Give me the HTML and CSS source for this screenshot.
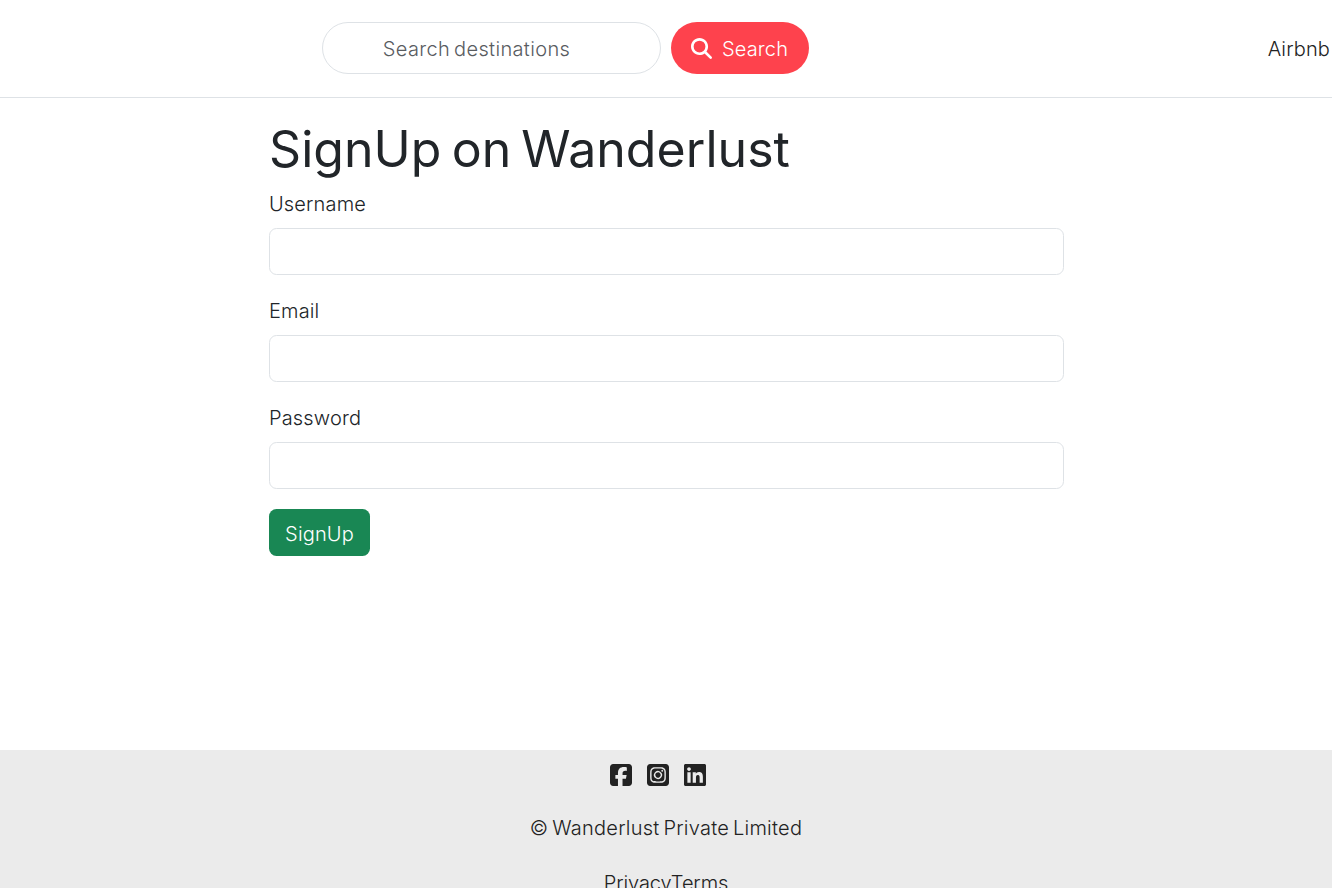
FILE: index.html
```
<!DOCTYPE html>
<html lang="en">
<head>
    <meta charset="UTF-8">
    <meta name="viewport" content="width=device-width, initial-scale=1.0">
    <title>Wanderlust</title>
    <link rel="stylesheet" href="styles.css">
</head>
<body>
    <nav class="navbar">
        <form class="search-form" role="search">
            <input class="search-inp" type="search" placeholder="Search destinations">
            <button class="search-btn" type="button">
                <svg class="icon" viewBox="0 0 512 512"><path d="M416 208c0 45.9-14.9 88.3-40 122.7L502.6 457.4c12.5 12.5 12.5 32.8 0 45.3s-32.8 12.5-45.3 0L330.7 376c-34.4 25.2-76.8 40-122.7 40C93.1 416 0 322.9 0 208S93.1 0 208 0S416 93.1 416 208zM208 352a144 144 0 1 0 0-288 144 144 0 1 0 0 288z"/></svg>
                <span>Search</span>
            </button>
        </form>
        <a class="nav-link" href="#">Airbnb</a>
    </nav>

    <main class="container">
        <h1>SignUp on Wanderlust</h1>
        <form>
            <div class="field">
                <label for="username">Username</label>
                <input type="text" id="username" name="username" required>
            </div>
            <div class="field">
                <label for="email">Email</label>
                <input type="email" id="email" name="email" required>
            </div>
            <div class="field">
                <label for="password">Password</label>
                <input type="password" id="password" name="password" required>
            </div>
            <button class="btn-success">SignUp</button>
        </form>
    </main>

    <footer>
        <div class="socials">
            <svg viewBox="0 0 448 512"><path d="M64 32C28.7 32 0 60.7 0 96V416c0 35.3 28.7 64 64 64h98.200V334.200H109.400V256h52.800V222.300c0-87.100 39.400-127.500 125-127.500c16.200 0 44.200 3.200 55.700 6.400V172c-6-.6-16.500-1-29.600-1c-42 0-58.200 15.900-58.200 57.200V256h83.600l-14.400 78.200H255V480H384c35.300 0 64-28.700 64-64V96c0-35.300-28.700-64-64-64H64z"/></svg>
            <svg viewBox="0 0 448 512"><path d="M194.400 211.700a53.300 53.300 0 1 0 59.300 88.700 53.300 53.300 0 1 0-59.300-88.700zm142.300-68.400c-5.200-5.200-11.500-9.300-18.400-12c-18.100-7.100-57.600-6.800-83.100-6.500c-4.100 0-7.900 .1-11.200 .1s-7.200 0-11.400-.1c-25.500-.3-64.800-.7-82.900 6.500c-6.900 2.700-13.100 6.800-18.400 12s-9.300 11.500-12 18.400c-7.100 18.100-6.700 57.700-6.500 83.200c0 4.100 .1 7.900 .1 11.100s0 7-.1 11.100c-.2 25.500-.6 65.100 6.500 83.200c2.700 6.900 6.800 13.100 12 18.400s11.500 9.300 18.400 12c18.100 7.100 57.600 6.800 83.100 6.500c4.100 0 7.900-.1 11.200-.1s7.200 0 11.400 .1c25.500 .3 64.800 .7 82.900-6.500c6.900-2.700 13.100-6.800 18.400-12s9.300-11.500 12-18.400c7.200-18 6.800-57.400 6.500-83c0-4.200-.1-8.100-.1-11.400s0-7.100 .1-11.400c.3-25.500 .7-64.900-6.500-83c-2.700-6.900-6.800-13.100-12-18.400zm-67.100 44.500A82 82 0 1 1 178.400 324.200a82 82 0 1 1 91.100-136.400zm29.200-1.300c-3.100-2.100-5.600-5.100-7.100-8.600s-1.800-7.300-1.100-11.100s2.600-7.100 5.200-9.800s6.100-4.500 9.800-5.200s7.600-.4 11.100 1.100s6.500 3.900 8.600 7s3.200 6.800 3.200 10.600c0 2.500-.5 5-1.400 7.300s-2.400 4.400-4.100 6.200s-3.900 3.200-6.200 4.200s-4.800 1.500-7.300 1.500c-3.800 0-7.500-1.100-10.600-3.200zM448 96c0-35.300-28.700-64-64-64H64C28.700 32 0 60.700 0 96V416c0 35.300 28.700 64 64 64H384c35.300 0 64-28.700 64-64V96zM357 389c-18.700 18.700-41.400 24.600-67 25.900c-26.400 1.500-105.600 1.500-132 0c-25.600-1.300-48.300-7.200-67-25.900s-24.600-41.400-25.800-67c-1.500-26.400-1.500-105.600 0-132c1.300-25.600 7.100-48.300 25.800-67s41.500-24.600 67-25.800c26.400-1.500 105.600-1.500 132 0c25.600 1.300 48.300 7.100 67 25.800s24.600 41.400 25.800 67c1.500 26.300 1.500 105.400 0 131.900c-1.300 25.600-7.100 48.300-25.800 67z"/></svg>
            <svg viewBox="0 0 448 512"><path d="M416 32H31.900C14.300 32 0 46.500 0 64.300v383.400C0 465.500 14.300 480 31.900 480H416c17.600 0 32-14.500 32-32.300V64.300c0-17.800-14.400-32.300-32-32.300zM135.400 416H69V202.200h66.500V416zm-33.200-243c-21.300 0-38.500-17.300-38.500-38.500S80.900 96 102.200 96c21.200 0 38.500 17.300 38.500 38.500 0 21.300-17.200 38.500-38.500 38.500zm282.100 243h-66.400V312c0-24.800-.5-56.700-34.500-56.700-34.600 0-39.900 27-39.900 54.900V416h-66.400V202.200h63.700v29.200h.9c8.900-16.800 30.600-34.500 62.900-34.500 67.200 0 79.700 44.300 79.700 101.900V416z"/></svg>
        </div>
        <div class="copyright">&copy; Wanderlust Private Limited</div>
        <div class="links">
            <a href="#">Privacy</a><a href="#">Terms</a>
        </div>
    </footer>
</body>
</html>
```
FILE: styles.css
```
* {
    box-sizing: border-box;
}

body {
    margin: 0;
    height: 100vh;
    display: flex;
    flex-direction: column;
    overflow: hidden;
    font-family: Inter, "Open Sans", sans-serif;
    font-size: 20px;
    font-weight: 300;
    line-height: 30px;
    letter-spacing: 0.15px;
    color: #212529;
    background-color: #fff;
}

input, button {
    font: inherit;
    letter-spacing: inherit;
}

a {
    color: #222;
    text-decoration: none;
}

/* Navbar */
.navbar {
    flex: none;
    height: 98px;
    padding: 22px 2px 0 322px;
    display: flex;
    justify-content: space-between;
    align-items: flex-start;
    border-bottom: 1px solid #dee2e6;
}

.search-form {
    display: flex;
    gap: 10px;
}

.search-inp {
    width: 339px;
    height: 52px;
    border: 1px solid #dee2e6;
    border-radius: 26px;
    padding: 10px 32px 8px 20px;
    text-align: center;
    word-spacing: -2px;
    letter-spacing: 0.35px;
    appearance: none;
}

.search-inp::placeholder {
    color: #595c5f;
    opacity: 1;
}

.search-btn {
    width: 138px;
    height: 52px;
    padding: 0 20px;
    display: flex;
    align-items: center;
    gap: 10px;
    border: 0;
    border-radius: 26px;
    color: #fff;
    background-color: #fe424d;
    white-space: nowrap;
}

.search-btn span {
    padding-top: 2px;
}

.icon {
    flex: none;
    width: 21px;
    height: 21px;
    fill: #fff;
}

.nav-link {
    padding-top: 12px;
}

/* Signup form */
.container {
    flex: none;
    width: 796px;
    height: 652px;
    margin: 0 auto;
    padding: 21px 0 0 1px;
}

h1 {
    margin: 0 0 10px;
    font-size: 50px;
    font-weight: 400;
    line-height: 60px;
    word-spacing: -4px;
    letter-spacing: 0.05px;
}

.field {
    margin-bottom: 20px;
}

label {
    display: block;
    width: fit-content;
    margin-bottom: 9px;
}

.field input {
    display: block;
    width: 100%;
    height: 47px;
    margin-bottom: 21px;
    padding: 7px 15px;
    border: 1px solid #dee2e6;
    border-radius: 7.5px;
}

.field:last-of-type input {
    margin-bottom: 20px;
}

.btn-success {
    width: 101px;
    height: 47px;
    padding: 2px 0 0;
    border: 0;
    border-radius: 7.5px;
    color: #fff;
    background-color: #198754;
}

/* Footer */
footer {
    flex: none;
    height: 160px;
    display: flex;
    flex-direction: column;
    align-items: center;
    color: #222;
    background-color: #ebebeb;
}

.socials {
    display: flex;
    gap: 15px;
    margin: 12px 16px 25px 0;
}

.socials svg {
    width: 22px;
    height: 26px;
    fill: #222;
}

.copyright {
    word-spacing: -2px;
    letter-spacing: 0.25px;
}

.links {
    margin-top: 25px;
    letter-spacing: -0.1px;
}
```
